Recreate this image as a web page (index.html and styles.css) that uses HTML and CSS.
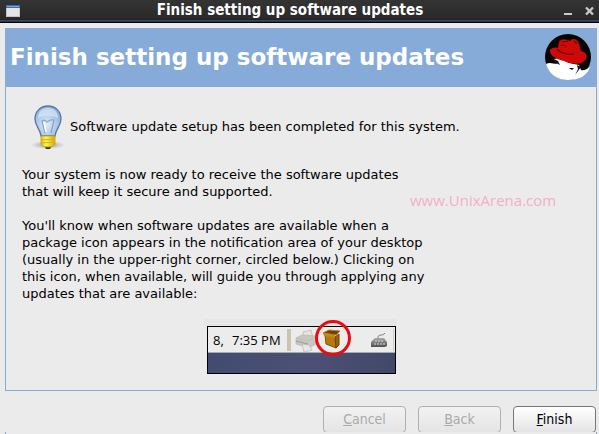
FILE: index.html
```html
<!DOCTYPE html>
<html lang="en">
<head>
<meta charset="utf-8">
<title>Finish setting up software updates</title>
<link rel="stylesheet" href="styles.css">
</head>
<body>
<div class="window">
  <header class="titlebar">
    <svg class="window-icon" width="14" height="12" viewBox="0 0 14 12" aria-hidden="true">
      <rect width="14" height="12" fill="#c4c4c2"/>
      <rect x="1" y="3" width="12" height="8" fill="#e4e4e2"/>
      <rect width="14" height="3" fill="#3d6eb0"/>
      <rect x="1" y="1" width="12" height="1" fill="#7ba3d5"/>
    </svg>
    <span class="titlebar-text">Finish setting up software updates</span>
    <div class="window-controls">
      <button class="window-button" type="button" aria-label="Minimize">
        <svg width="9" height="10" viewBox="0 0 9 10"><path d="M0 7h8v2H0z" fill="#c9c9c9"/></svg>
      </button>
      <button class="window-button" type="button" aria-label="Close">
        <svg width="9" height="10" viewBox="0 0 9 10"><path d="M1 1.500l7 7M8 1.500l-7 7" stroke="#c9c9c9" stroke-width="2.400"/></svg>
      </button>
    </div>
  </header>

  <main class="page">
    <div class="banner">
      <h1 class="banner-title">Finish setting up software updates</h1>
      <svg class="logo" width="46" height="46" viewBox="0 0 46 46" aria-hidden="true">
        <circle cx="23" cy="23" r="23" fill="#050505"/>
        <path d="M1 30C5 28 8 30 12 30L9 25L15 24L24 29L34 31L36 36C39 37 42 35 45 33C42 42 34 46 23 46C12 46 4 40 1 30Z" fill="#fff"/>
        <path d="M5 16C6 14 10 13 13 14L14 8C16 4 21 5 25 7C29 3 33 6 34 10L36 17C41 18 43 22 41 25C38 31 27 31 19 27C11 25 4 21 5 16Z" fill="#cf0808"/>
        <path d="M12 15C15 19 23 21 29 20M16 11L21 12M17 8L23 7M29 7L32 10" stroke="#680000" stroke-width="1.200" fill="none"/>
        <path d="M9 25L13 27L15 31L11 29ZM24 34L29 34L27 36ZM32 31L36 33L30 41L33 35Z" fill="#111"/>
      </svg>
    </div>

    <div class="content">
      <div class="status">
        <svg class="bulb" width="36" height="46" viewBox="0 0 36 46" aria-hidden="true">
          <defs>
            <radialGradient id="glass" cx=".45" cy=".62" r=".6">
              <stop offset="0" stop-color="#e0ebf7"/>
              <stop offset=".55" stop-color="#b5cdea"/>
              <stop offset="1" stop-color="#91b1d8"/>
            </radialGradient>
            <linearGradient id="brass">
              <stop offset="0" stop-color="#d9bd10"/>
              <stop offset=".35" stop-color="#fff45e"/>
              <stop offset="1" stop-color="#d2ab0a"/>
            </linearGradient>
            <radialGradient id="shade">
              <stop offset="0" stop-color="#777" stop-opacity=".7"/>
              <stop offset="1" stop-color="#777" stop-opacity="0"/>
            </radialGradient>
          </defs>
          <ellipse cx="18" cy="42" rx="17" ry="4" fill="url(#shade)"/>
          <path d="M18 3C10 3 5 9 5 16C5 23 10 25 11 33H25C26 25 31 23 31 16C31 9 26 3 18 3Z" fill="url(#glass)" stroke="#5478a2" stroke-width="1.300"/>
          <path d="M8 15C8 8 13 5 18 5C24 5 28 9 28 15C22 12 14 12 8 15Z" fill="#dce9f7" opacity=".65"/>
          <path d="M15 30L12 18Q15 16 17 19Q21 16 24 17L21 30" stroke="#8ba2bf" stroke-width="1.200" fill="none"/>
          <path d="M14 19L16 29" stroke="#fff" stroke-width="1.500"/>
          <path d="M14 42H22L20 46H16Z" fill="#34332f"/>
          <path d="M11 33H25V41Q24 44 18 44Q12 44 11 41Z" fill="url(#brass)" stroke="#c7a500" stroke-width=".8"/>
          <path d="M11 37L25 36M11 40L25 39" stroke="#d6b414" stroke-width="1"/>
        </svg>
        <p class="text">Software update setup has been completed for this system.</p>
      </div>
      <p class="text">Your system is now ready to receive the software updates<br>that will keep it secure and supported.</p>
      <p class="text">You'll know when software updates are available when a<br>package icon appears in the notification area of your desktop<br>(usually in the upper-right corner, circled below.) Clicking on<br>this icon, when available, will guide you through applying any<br>updates that are available:</p>
      <figure class="preview">
        <svg class="preview-image" width="192" height="55" viewBox="0 2 192 55" role="img" aria-label="Package icon circled in the notification area">
          <defs>
            <linearGradient id="desktop">
              <stop offset="0" stop-color="#424c70"/>
              <stop offset=".55" stop-color="#4c5075"/>
              <stop offset="1" stop-color="#424968"/>
            </linearGradient>
            <linearGradient id="key" x2="0" y2="1">
              <stop offset="0" stop-color="#aaa"/>
              <stop offset="1" stop-color="#505050"/>
            </linearGradient>
          </defs>
          <path d="M0 1H192V9H0Z" fill="#e6e6e6"/>
          <rect x="3.500" y="9.500" width="188" height="47" fill="#ececec" stroke="#000"/>
          <rect x="4" y="36" width="187" height="20" fill="url(#desktop)"/>
          <path d="M4 35.500H191" stroke="#a6acb5"/>
          <text x="9" y="28" class="clock">8,</text>
          <text x="28" y="28" class="clock">7:35 PM</text>
          <rect x="83" y="12" width="4" height="22" fill="#cbc5ae"/>
          <path d="M189.500 12V34" stroke="#d2cec0"/>
          <g stroke="#b9b8ae" stroke-width=".7">
            <path d="M99 15L107 13L109 21L100 23Z" fill="#e4e4df"/>
            <path d="M92 21L98 18L112 19L112 27L105 31L92 27Z" fill="#c9c8c0"/>
            <path d="M92 21L104 24L112 19" fill="none"/>
            <path d="M98 27L105 28L108 33L100 35Z" fill="#e6e6e2"/>
            <path d="M92 24L104 27" stroke="#88887f"/>
          </g>
          <path d="M121 18L131 19L132 31L122 27Z" fill="#b87810" stroke="#875200"/>
          <path d="M131 20L135 17V28L132 31Z" fill="#9a6210" stroke="#734201"/>
          <path d="M119 16L125 13L136 14L132 18Z" fill="#6d420c" stroke="#b67b18"/>
          <path d="M119 16L131 18L131 21L120 19Z" fill="#c88417"/>
          <circle cx="129" cy="21" r="16.500" fill="none" stroke="#ea0c12" stroke-width="3"/>
          <path d="M167 25L171 21H180L183 25V29L181 30H167Z" fill="url(#key)"/>
          <path d="M171 24H180M170 27H182" stroke="#d9d9d9" stroke-width="1" stroke-dasharray="2 1"/>
          <path d="M174 21C174 16 178 20 181 16" stroke="#777" fill="none"/>
        </svg>
      </figure>
      <span class="watermark">www.UnixArena.com</span>
    </div>
  </main>

  <footer class="actions">
    <button class="button" type="button" disabled><u>C</u>ancel</button>
    <button class="button" type="button" disabled><u>B</u>ack</button>
    <button class="button" type="button"><u>F</u>inish</button>
  </footer>
  <div class="lower-edge"></div>
</div>
</body>
</html>
```
FILE: styles.css
```css
* {
  box-sizing: border-box;
}

body {
  margin: 0;
  background: #ebebeb;
  color: #000;
  font: 13px/17px "DejaVu Sans", sans-serif;
}

.window {
  overflow: hidden;
}

.titlebar {
  display: grid;
  grid-template-columns: 1fr auto 1fr;
  align-items: center;
  height: 23px;
  padding: 0 5px 2px 6px;
  background: linear-gradient(#343434, #292929 19px, #18202c 20px, #4e729f 21px, #000 22px);
  color: #fff;
}

.titlebar-text {
  margin-right: 20px;
  font: bold 15px/17px "DejaVu Sans Condensed", "DejaVu Sans", sans-serif;
}

.window-controls {
  display: flex;
  justify-content: flex-end;
  gap: 12px;
}

.window-button {
  display: flex;
  padding: 0;
  border: 0;
  background: none;
}

.page {
  margin: 5px 2px 0 5px;
  border: 1px solid #86abd9;
}

.banner {
  display: flex;
  align-items: center;
  justify-content: space-between;
  height: 58px;
  padding: 0 5px 2px 4px;
  background: #86abd9;
  color: #fff;
}

.banner-title {
  margin: 0;
  font-size: 23px;
  line-height: 28px;
}

.content {
  position: relative;
  display: flex;
  flex-direction: column;
  gap: 17px;
  padding: 16px;
}

.status {
  display: flex;
  align-items: center;
  gap: 4px;
  padding-left: 8px;
}

.text {
  margin: 0;
}

.preview {
  margin: 0 0 0 182px;
}

.preview-image {
  display: block;
}

.clock {
  font: 500 13px "Open Sans", sans-serif;
}

.watermark {
  position: absolute;
  top: 103px;
  left: 404px;
  color: #f3afc8;
  font: 15px/20px "Open Sans", sans-serif;
}

.actions {
  display: flex;
  justify-content: flex-end;
  gap: 12px;
  height: 41px;
  padding: 15px 3px 0;
  overflow: hidden;
}

.button {
  flex: none;
  width: 83px;
  height: 27px;
  padding: 0;
  border: 1px solid #777;
  border-radius: 4px;
  background: linear-gradient(#fff, #e4e4e4);
  color: #000;
  font: 14px/17px "DejaVu Sans Condensed", "DejaVu Sans", sans-serif;
}

.button:disabled {
  border-color: #b0b0b0;
  background: linear-gradient(#f2f2f2, #e4e4e4);
  color: #aaa;
}

.lower-edge {
  height: 2px;
  margin: 0 2px 0 5px;
  border: solid #86abd9;
  border-width: 0 1px;
}
```
